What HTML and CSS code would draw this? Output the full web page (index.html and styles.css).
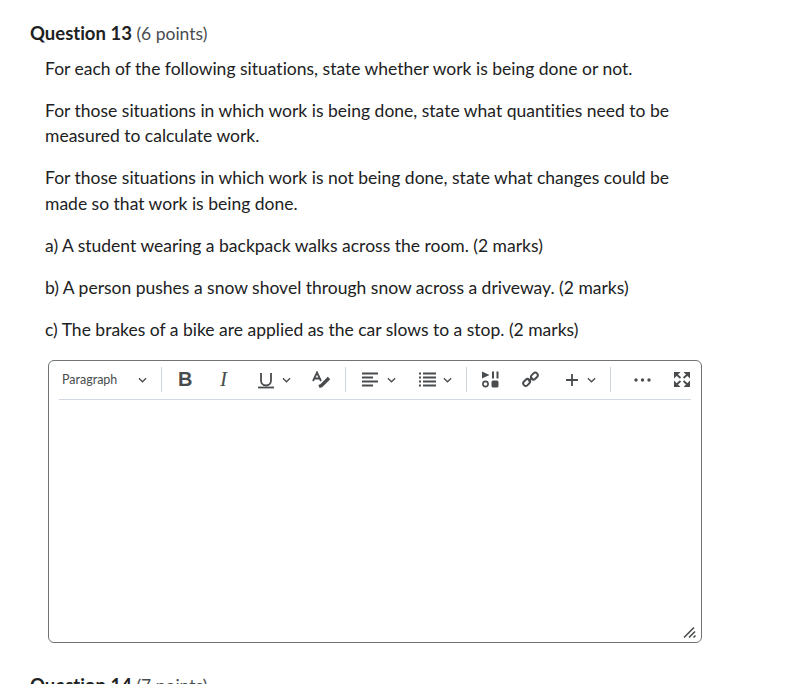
FILE: index.html
```html
<!DOCTYPE html>
<html lang="en">
<head>
    <meta charset="UTF-8">
    <title>Quiz</title>
    <link rel="stylesheet" href="styles.css">
</head>
<body>
    <section class="question">
        <h2 class="question-title">Question 13 <span>(6 points)</span></h2>
        <div class="question-body">
            <p>For each of the following situations, state whether work is being done or not.</p>
            <p>For those situations in which work is being done, state what quantities need to be measured to calculate work.</p>
            <p>For those situations in which work is not being done, state what changes could be made so that work is being done.</p>
            <p>a) A student wearing a backpack walks across the room. (2 marks)</p>
            <p>b) A person pushes a snow shovel through snow across a driveway. (2 marks)</p>
            <p>c) The brakes of a bike are applied as the car slows to a stop. (2 marks)</p>
        </div>
        <div class="editor">
            <div class="toolbar">
                <div class="tool tool-format">
                    <span class="format-label">Paragraph</span>
                    <svg class="chev" viewBox="0 0 10 6"><path d="M1 1l4 4 4-4"/></svg>
                </div>
                <div class="sep"></div>
                <div class="tool tool-bold">B</div>
                <div class="tool tool-italic">I</div>
                <div class="tool tool-underline">
                    <svg class="icon" width="16" height="18" viewBox="0 0 16 18"><path class="line" d="M3 2v7.500a5 5 0 0 0 10 0V2"/><path class="line" d="M0 16.500h16"/></svg>
                    <svg class="chev" viewBox="0 0 10 6"><path d="M1 1l4 4 4-4"/></svg>
                </div>
                <div class="tool tool-colour">
                    <svg class="icon" width="18" height="17" viewBox="0 0 18 17"><path class="line" d="M1 10L5 1.500 9 10M2.500 7.500h5"/><path class="fat" d="M7 15.500l2.500-1L17 7"/></svg>
                </div>
                <div class="sep sep-colour"></div>
                <div class="tool tool-align">
                    <svg class="icon" width="16" height="15" viewBox="0 0 16 15"><path class="line" d="M0 1.500h16M0 5.500h11M0 9.500h16M0 13.500h11"/></svg>
                    <svg class="chev" viewBox="0 0 10 6"><path d="M1 1l4 4 4-4"/></svg>
                </div>
                <div class="tool tool-list">
                    <svg class="icon" width="17" height="15" viewBox="0 0 17 15"><path class="line" d="M4 1.500h13M4 5.500h13M4 9.500h13M4 13.500h13"/><path class="dots" d="M0 1.500h2M0 5.500h2M0 9.500h2M0 13.500h2"/></svg>
                    <svg class="chev" viewBox="0 0 10 6"><path d="M1 1l4 4 4-4"/></svg>
                </div>
                <div class="sep sep-list"></div>
                <div class="tool tool-media">
                    <svg class="icon" width="17" height="17" viewBox="0 0 17 17"><path class="solid" d="M0 0.500l7.500 3.500L0 7.500z"/><path class="solid" d="M10 0.500h2v7h-2zM14.500 0.500h2v7h-2z"/><circle class="ring" cx="3.500" cy="13" r="2.600"/><rect class="solid" x="9.500" y="9.500" width="7" height="7" rx="1.500"/></svg>
                </div>
                <div class="tool tool-link">
                    <svg class="icon" width="17" height="17" viewBox="0 0 17 17"><g class="link-stroke"><rect x="0.900" y="9" width="7.500" height="5" rx="2.500" transform="rotate(-45 4.600 11.500)"/><rect x="8.600" y="2.500" width="7.500" height="5" rx="2.500" transform="rotate(-45 12.400 5)"/><path d="M6.500 10.500l4-4"/></g></svg>
                </div>
                <div class="tool tool-plus">
                    <svg class="icon" width="12" height="12" viewBox="0 0 12 12"><path class="line" d="M6 0v12M0 6h12"/></svg>
                    <svg class="chev" viewBox="0 0 10 6"><path d="M1 1l4 4 4-4"/></svg>
                </div>
                <div class="sep sep-plus"></div>
                <div class="tool tool-more">
                    <svg class="icon" width="17" height="4" viewBox="0 0 17 4"><circle class="solid" cx="2" cy="2" r="1.700"/><circle class="solid" cx="8.500" cy="2" r="1.700"/><circle class="solid" cx="15" cy="2" r="1.700"/></svg>
                </div>
                <div class="tool tool-full">
                    <svg class="icon" width="16" height="15" viewBox="0 0 16 15"><path class="solid" d="M0 0h6.500L0 6.500zM16 0H9.500L16 6.500zM0 15h6.500L0 8.500zM16 15H9.500L16 8.500z"/><path class="line" d="M2 2l4.500 4M14 2L9.500 6M2 13l4.500-4M14 13L9.500 9"/></svg>
                </div>
            </div>
            <div class="editor-area">
                <svg class="grip" width="14" height="14" viewBox="0 0 14 14"><path d="M1 12.500L11 2.500M6 12.500L12 6.500M10.500 12.500L12.500 10.500"/></svg>
            </div>
        </div>
    </section>
    <section class="question">
        <h2 class="question-title">Question 14 <span>(7 points)</span></h2>
    </section>
</body>
</html>
```
FILE: styles.css
```css
/* Page */
html, body {
    height: 684px;
    overflow: hidden;
}

body {
    margin: 0;
    padding: 20.5px 0 0 30px;
    box-sizing: border-box;
    background-color: #fff;
    color: #202122;
    font-family: 'Lato', sans-serif;
    font-size: 17.5px;
    line-height: 25.5px;
    font-variant-ligatures: none;
}

/* Question */
.question {
    width: 672px;
    margin-bottom: 30.5px;
}

.question-title {
    margin: 0 0 10px;
    font-size: 18.5px;
    font-weight: 700;
    line-height: 25px;
}

.question-title span {
    font-size: 17.5px;
    font-weight: 400;
    color: #494c4e;
}

.question-body {
    padding-left: 15px;
}

.question-body p {
    margin: 0 0 16.5px;
}

/* Editor */
.editor {
    width: 652px;
    height: 281px;
    margin: 17.5px 0 0 18px;
    border: 1px solid #6e7477;
    border-radius: 6px;
}

.toolbar {
    display: flex;
    align-items: center;
    height: 38px;
    margin: 0 10px;
    border-bottom: 1px solid #d3d9e3;
}

.tool {
    display: flex;
    align-items: center;
    height: 24px;
}

.sep {
    width: 1px;
    height: 25px;
    background-color: #cdd5dc;
}

.chev {
    width: 9px;
    height: 6px;
    fill: none;
    stroke: #494c4e;
    stroke-width: 1.4;
}

.icon {
    display: block;
    flex: none;
}

.line {
    fill: none;
    stroke: #494c4e;
    stroke-width: 1.8;
}

.fat {
    fill: none;
    stroke: #494c4e;
    stroke-width: 3.4;
}

.dots {
    fill: none;
    stroke: #494c4e;
    stroke-width: 2;
}

.solid {
    fill: #494c4e;
}

.ring {
    fill: none;
    stroke: #494c4e;
    stroke-width: 1.6;
}

.link-stroke {
    fill: none;
    stroke: #494c4e;
    stroke-width: 2;
}

/* Toolbar items, left to right */
.tool-format {
    width: 102px;
    padding-left: 3px;
    box-sizing: border-box;
}

.format-label {
    width: 76px;
    font-size: 12.5px;
    color: #494c4e;
}

.tool-bold {
    margin-left: 16px;
    width: 14px;
    font-family: 'Liberation Sans', sans-serif;
    font-size: 20px;
    font-weight: 700;
    color: #494c4e;
}

.tool-italic {
    margin-left: 28px;
    width: 10px;
    font-family: 'Liberation Serif', serif;
    font-size: 21px;
    font-style: italic;
    color: #494c4e;
}

.tool-underline {
    margin-left: 28px;
    gap: 8px;
}

.tool-colour {
    margin-left: 21px;
}

.sep-colour {
    margin-left: 15px;
}

.tool-align {
    margin-left: 16px;
    gap: 9px;
}

.tool-list {
    margin-left: 23px;
    gap: 7px;
}

.sep-list {
    margin-left: 14px;
}

.tool-media {
    margin-left: 15px;
}

.tool-link {
    margin-left: 23px;
}

.tool-plus {
    margin-left: 27px;
    gap: 9px;
}

.sep-plus {
    margin-left: 14px;
}

.tool-more {
    margin-left: 23px;
}

.tool-full {
    margin-left: 23px;
}

.editor-area {
    position: relative;
    height: 242px;
}

.grip {
    position: absolute;
    right: 4px;
    bottom: 3px;
    fill: none;
    stroke: #494c4e;
    stroke-width: 1.6;
}
```
